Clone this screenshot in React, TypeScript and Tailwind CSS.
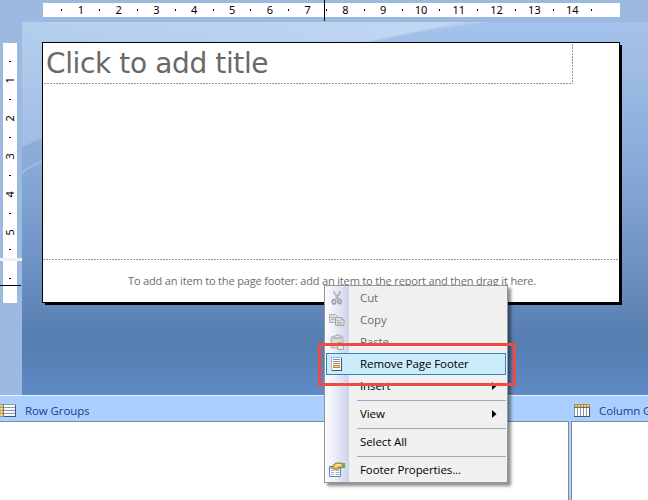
import type { ReactNode } from "react";

const UI = "font-['Open_Sans','Noto_Sans',sans-serif]";
const DIGITS = "font-['Noto_Sans','DejaVu_Sans',sans-serif] text-[11px] leading-none text-black";

function HorizontalRuler() {
  return (
    <div className="relative ml-[43px] mt-[3px] flex h-[14px] w-[577px] shrink-0 items-center bg-white pl-[9.5px]">
      {Array.from({ length: 14 }, (_, i) => (
        <div key={i} className={`flex w-[37.8px] shrink-0 items-center ${DIGITS}`}>
          <span className="flex w-[18.9px] justify-center">
            <i className="h-[2px] w-px bg-black" />
          </span>
          <span className="flex w-[18.9px] justify-center pb-[2px]">{i + 1}</span>
        </div>
      ))}
      <span className="flex w-[18.9px] justify-center">
        <i className="h-[2px] w-px bg-black" />
      </span>
      <div className="absolute -top-[3px] left-[281px] h-[21px] w-px bg-black" />
    </div>
  );
}

function VerticalRuler() {
  return (
    <div className="relative flex w-[22px] shrink-0 flex-col pt-[21px]">
      <div className="ml-[3px] flex h-[215px] w-[14px] shrink-0 flex-col bg-white pt-[9.5px]">
        {Array.from({ length: 5 }, (_, i) => (
          <div key={i} className={`flex h-[37.8px] shrink-0 flex-col items-center ${DIGITS}`}>
            <span className="flex h-[18.9px] items-center">
              <i className="h-px w-[2px] bg-black" />
            </span>
            <span className="flex h-[18.9px] -rotate-90 items-center pb-[2px]">{i + 1}</span>
          </div>
        ))}
        <span className="flex h-[16px] items-center justify-center">
          <i className="h-px w-[2px] bg-black" />
        </span>
      </div>
      <div className="h-[3px] w-[22px] shrink-0 bg-[#f0f0f0]" />
      <div className="ml-[3px] flex h-[42px] w-[14px] shrink-0 justify-center bg-white pt-[17px]">
        <i className="h-px w-[2px] bg-black" />
      </div>
      <div className="absolute left-0 top-[263px] h-px w-[21px] bg-black" />
    </div>
  );
}

function Backdrop() {
  return (
    <svg className="absolute inset-0" width="626" height="373" viewBox="0 0 626 373">
      <defs>
        <linearGradient id="sky" x1="0" y1="0" x2="0" y2="1">
          <stop offset="0" stopColor="#a4c2eb" />
          <stop offset="0.12" stopColor="#9ebce5" />
          <stop offset="0.4" stopColor="#87a9d7" />
          <stop offset="0.76" stopColor="#6287b9" />
          <stop offset="0.86" stopColor="#557db0" />
          <stop offset="1" stopColor="#608ac5" />
        </linearGradient>
        <linearGradient id="glow" x1="0" y1="0" x2="0" y2="1">
          <stop offset="0" stopColor="#b4cfed" />
          <stop offset="1" stopColor="#a0bce2" />
        </linearGradient>
        <linearGradient id="glowRight" x1="0" y1="0" x2="1" y2="0">
          <stop offset="0" stopColor="#c2d7f2" stopOpacity="0" />
          <stop offset="1" stopColor="#c2d7f2" />
        </linearGradient>
      </defs>
      <rect width="626" height="373" fill="url(#sky)" />
      <path d="M0 0H465Q410 6 349 20H330L20 116L0 125Z" fill="url(#glow)" />
      <path d="M0 0H440Q395 9 342 20H0Z" fill="url(#glowRight)" />
      <path d="M0 148.500L20 138V140L6 147L0 152Z" fill="#a1bce3" />
    </svg>
  );
}

function ReportPage() {
  return (
    <div className="relative ml-[20px] mt-[20px] flex h-[261px] w-[578px] flex-col border border-black bg-white shadow-[2.5px_2.5px_0_-0.5px_#000]">
      <div className="relative h-[41px] w-[530px] shrink-0">
        <div className="whitespace-nowrap pl-[3px] pt-[3px] font-['DejaVu_Sans',sans-serif] text-[28px] leading-[36px] tracking-[-0.38px] text-[#696969]">
          Click to add title
        </div>
        <div className="absolute bottom-0 left-px h-px w-[529px] bg-[repeating-linear-gradient(90deg,#969696_0_2px,#fff_2px_3px)]" />
        <div className="absolute right-0 top-px h-[40px] w-px bg-[repeating-linear-gradient(180deg,#969696_0_2px,#fff_2px_3px)]" />
      </div>
      <div className="mt-[175px] h-px shrink-0 bg-[repeating-linear-gradient(90deg,#969696_0_2px,#fff_2px_3px)]" />
      <div className={`whitespace-nowrap pl-[85px] pt-[13px] ${UI} text-[11px] leading-[16px] tracking-[-0.16px] text-[#6d6d6d]`}>
        To add an item to the page footer: add an item to the report and then drag it here.
      </div>
    </div>
  );
}

function RowGroupsIcon() {
  return (
    <svg width="16" height="13" viewBox="0 0 16 13" shapeRendering="crispEdges">
      <rect width="16" height="13" fill="#8c98ab" />
      <path d="M4 1h11v2H4zM4 4h11v2H4zM4 7h11v2H4zM4 10h11v2H4z" fill="#fff" />
      <path d="M4 5h11v1H4zM4 8h11v1H4zM4 11h11v1H4z" fill="#edf1f8" />
      <path d="M0 1h3v2H0zM0 4h3v2H0zM0 7h3v2H0zM0 10h3v2H0z" fill="#f2c960" />
      <path d="M1 1h1v1H1zM1 4h1v1H1zM1 7h1v1H1zM1 10h1v1H1z" fill="#fff1b5" />
      <path d="M3 0h1v13H3z" fill="#8d7c58" />
      <path d="M15 1h1v12H4v-1h11z" fill="#3e5878" />
    </svg>
  );
}

function ColumnGroupsIcon() {
  return (
    <svg width="16" height="13" viewBox="0 0 16 13" shapeRendering="crispEdges">
      <rect width="16" height="13" fill="#8c98ab" />
      <path d="M1 4h2v8H1zM4 4h2v8H4zM7 4h2v8H7zM10 4h2v8h-2zM13 4h2v8h-2z" fill="#fff" />
      <path d="M0 0h16v3H0z" fill="#a58a5c" />
      <path d="M1 1h2v1H1zM4 1h2v1H4zM7 1h2v1H7zM10 1h2v1h-2zM13 1h2v1h-2z" fill="#f7df9c" />
      <path d="M1 2h2v1H1zM4 2h2v1H4zM7 2h2v1H7zM10 2h2v1h-2zM13 2h2v1h-2z" fill="#e5bc62" />
      <path d="M0 3h16v1H0z" fill="#776c58" />
      <path d="M15 4h1v9H0v-1h15z" fill="#3e5878" />
    </svg>
  );
}

function CutIcon() {
  return (
    <svg width="16" height="16" viewBox="0 0 16 16" fill="none">
      <path d="M4.500 1.500L9 9M11.500 1.500L7 9" stroke="#b0b0b0" strokeWidth="2" />
      <path d="M4.500 2L7.500 7" stroke="#d9d9d9" />
      <ellipse cx="5" cy="11.800" rx="1.700" ry="2.200" stroke="#a4a4a4" strokeWidth="1.800" />
      <ellipse cx="10.500" cy="11.500" rx="1.600" ry="2.100" stroke="#a4a4a4" strokeWidth="1.800" />
    </svg>
  );
}

function CopyIcon() {
  return (
    <svg width="16" height="16" viewBox="0 0 16 16">
      <path d="M.5 2.500h6l2 2v6h-8z" fill="#dedede" stroke="#b2b2b2" />
      <path d="M2 5.500h4M2 7.500h4" stroke="#b2b2b2" />
      <path d="M6.500 5.500h6l2.500 2.500v5.500H6.500z" fill="#dedede" stroke="#a6a6a6" />
      <path d="M12.500 5.500V8H15M8 8.500h3M8 10.500h5M8 12h5" stroke="#b2b2b2" fill="none" />
    </svg>
  );
}

function PasteIcon() {
  return (
    <svg width="16" height="16" viewBox="0 0 16 16">
      <path d="M2 3h12v11H2z" fill="#cfcfcf" stroke="#b5b5b5" />
      <path d="M5 4V2h2V1h3v1h2v2z" fill="#e4e4e4" stroke="#a9a9a9" />
      <path d="M4 5.500h8V13H4z" fill="#dcdcdc" />
      <path d="M8.500 8.500h4l2 2v5h-6z" fill="#e8e8e8" stroke="#aaa" />
    </svg>
  );
}

function FooterIcon() {
  return (
    <svg width="16" height="16" viewBox="0 0 16 16" shapeRendering="crispEdges">
      <path d="M2 1h11v14H2z" fill="#a9b4c5" />
      <path d="M3 2h9v12H3z" fill="#fff" />
      <path d="M4 3h7v1H4zM4 5h7v1H4zM4 7h7v1H4z" fill="#7b8db0" />
      <path d="M4 9h7v3H4z" fill="#cf832c" />
      <path d="M5 10h5v1H5z" fill="#ffdc94" />
      <path d="M12 2h1v13H3v-1h9z" fill="#46566f" />
    </svg>
  );
}

function PropertiesIcon() {
  return (
    <svg width="16" height="16" viewBox="0 0 16 16">
      <path d="M.5 4.500h11v10H.5z" fill="#fff" stroke="#6484ad" />
      <path d="M1 5h10v2H1z" fill="#a9c3e6" />
      <path d="M2 8.500h3M6.500 8.500h4M2 10.500h3M6.500 10.500h4M2 12.500h3M6.500 12.500h4" stroke="#9db3d3" />
      <path d="M2.500 5L6 1.500L8 1h5l1 1v3l-2 1-2-.5L8.500 8 7 6.500 5.500 8 4 6.500z" fill="#dfb245" stroke="#80652b" strokeWidth=".8" />
      <path d="M6 3.500L8 2h4v1.500L9 4 6.500 5.500z" fill="#ffea94" />
      <path d="M13.500 1H16v5h-2.500z" fill="#6bab55" />
    </svg>
  );
}

function MenuItem({ icon, label, disabled, active, submenu }: {
  icon?: ReactNode;
  label: string;
  disabled?: boolean;
  active?: boolean;
  submenu?: boolean;
}) {
  return (
    <div
      className={`flex h-[22px] w-[180px] shrink-0 items-center border ${
        active ? "border-[#3b83b5] bg-[#cbecfa]" : "border-transparent"
      } ${disabled ? "text-[#6d6d6d]" : "text-black"}`}
    >
      <span className="ml-[2px] flex w-[31px] shrink-0">{icon}</span>
      <span className="flex-1 whitespace-nowrap">{label}</span>
      {submenu && (
        <svg className="mr-[8px]" width="5" height="8" viewBox="0 0 5 8">
          <path d="M0 0L4.500 4L0 8Z" fill="#000" />
        </svg>
      )}
    </div>
  );
}

function Separator() {
  return (
    <div className="flex h-[6px] shrink-0 items-center pl-[31px]">
      <div className="h-px w-[149px] bg-[#a2a6b9]" />
    </div>
  );
}

function ContextMenu() {
  return (
    <div
      className={`absolute left-[324px] top-[285px] flex h-[198px] w-[184px] flex-col border border-[#979797] bg-[linear-gradient(90deg,#fcfcff_0,#eef0fb_8px,#ccd4ea_24px,#f0f0f0_24px)] p-px text-[11.5px] leading-[16px] tracking-[-0.09px] shadow-[3px_3px_3px_rgba(0,0,0,0.45)] ${UI}`}
    >
      <MenuItem icon={<CutIcon />} label="Cut" disabled />
      <MenuItem icon={<CopyIcon />} label="Copy" disabled />
      <MenuItem icon={<PasteIcon />} label="Paste" disabled />
      <MenuItem icon={<FooterIcon />} label="Remove Page Footer" active />
      <MenuItem label="Insert" submenu />
      <Separator />
      <MenuItem label="View" submenu />
      <Separator />
      <MenuItem label="Select All" />
      <Separator />
      <MenuItem icon={<PropertiesIcon />} label="Footer Properties..." />
    </div>
  );
}

export default function App() {
  return (
    <div className="relative flex h-[500px] w-[648px] flex-col overflow-hidden bg-[#9bb9e1]">
      <div className="flex h-[22px] shrink-0 flex-col">
        <HorizontalRuler />
      </div>
      <div className="flex h-[373px] shrink-0">
        <VerticalRuler />
        <div className="relative flex-1 overflow-hidden">
          <Backdrop />
          <ReportPage />
        </div>
      </div>
      <div className={`flex h-[26px] shrink-0 items-center border-t border-[#e1efff] bg-[#abcfff] ${UI} text-[11.5px] leading-[16px] tracking-[-0.1px] text-[#15428b]`}>
        <div className="flex w-[574px] shrink-0 items-center gap-[9px] pt-[4px]">
          <RowGroupsIcon />
          <span className="whitespace-nowrap">Row Groups</span>
        </div>
        <div className="flex shrink-0 items-center gap-[9px] pt-[4px]">
          <ColumnGroupsIcon />
          <span className="whitespace-nowrap">Column G</span>
        </div>
      </div>
      <div className="flex h-[79px] shrink-0 gap-[2px] bg-[#abcfff]">
        <div className="w-[569px] shrink-0 border-r border-t border-[#7f8b9d] bg-white" />
        <div className="flex-1 border-l border-t border-[#7f8b9d] bg-white" />
      </div>
      <ContextMenu />
      <div className="absolute left-[318px] top-[343px] h-[43px] w-[198px] border-[3px] border-[#ed4b44]" />
    </div>
  );
}
